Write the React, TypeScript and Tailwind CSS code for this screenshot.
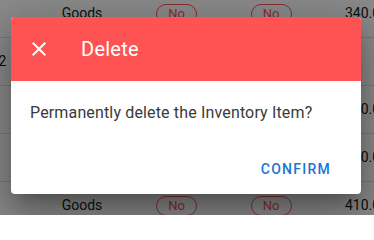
import { X } from "lucide-react";

const rows = [
  { name: "", type: "Goods", a: "No", b: "No", price: "340.0" },
  { name: "Item 2", type: "", a: "", b: "", price: "" },
  { name: "", type: "Goods", a: "No", b: "No", price: "120.0" },
  { name: "", type: "Goods", a: "No", b: "No", price: "150.0" },
  { name: "", type: "Goods", a: "No", b: "No", price: "410.0" },
];

const Chip = ({ label }: { label: string }) => (
  <span className="inline-flex h-5 w-[41px] items-center justify-center rounded-full border border-[#ff5252] text-[13px] text-[#ff5252]">
    {label}
  </span>
);

const CloseIcon = () => (
  <svg viewBox="0 0 24 24" className="h-6 w-6 fill-white">
    <path d="M19 6.41L17.59 5 12 10.59 6.41 5 5 6.41 10.59 12 5 17.59 6.41 19 12 13.41 17.59 19 19 17.59 13.41 12z" />
  </svg>
);

export default function App() {
  return (
    <div className="relative h-[215px] w-[374px] overflow-hidden bg-white font-['Roboto',sans-serif]">
      {/* table behind the dialog */}
      <div className="-ml-[40px] -mt-[10px] text-[14px] text-[#212121]">
        {rows.map((r, i) => (
          <div
            key={i}
            className="grid h-12 grid-cols-[82px_80px_109px_80px_1fr] items-center border-b border-[#e0e0e0] whitespace-nowrap"
          >
            <div className="pl-[7px]">{r.name}</div>
            <div className="text-center">{r.type}</div>
            <div className="flex justify-center">{r.a && <Chip label={r.a} />}</div>
            <div className="flex justify-center">{r.b && <Chip label={r.b} />}</div>
            <div className="pl-[34px]">{r.price}</div>
          </div>
        ))}
      </div>

      {/* overlay + dialog */}
      <div className="absolute inset-0 bg-[rgba(0,0,0,0.46)] pl-[11px] pt-[17px]">
        <div className="w-[350px] overflow-hidden rounded bg-white shadow-[0_11px_15px_-7px_rgba(0,0,0,0.25),0_24px_38px_3px_rgba(0,0,0,0.18),0_9px_46px_8px_rgba(0,0,0,0.15)]">
          <div className="flex h-16 items-center bg-[#ff5252] pl-4 text-white">
            <CloseIcon />
            <span className="ml-[30px] text-[20px] tracking-[0.25px]">Delete</span>
          </div>
          <p className="pb-[26px] pl-[19px] pt-5 text-[16px] leading-6 tracking-[0.15px] text-[#3a3a3a]">
            Permanently delete the Inventory Item?
          </p>
          <div className="flex justify-end pb-[7px] pr-[14px]">
            <button className="h-9 px-4 text-[14px] font-medium uppercase leading-9 tracking-[1.25px] text-[#1976d2]">
              Confirm
            </button>
          </div>
        </div>
      </div>
    </div>
  );
}
